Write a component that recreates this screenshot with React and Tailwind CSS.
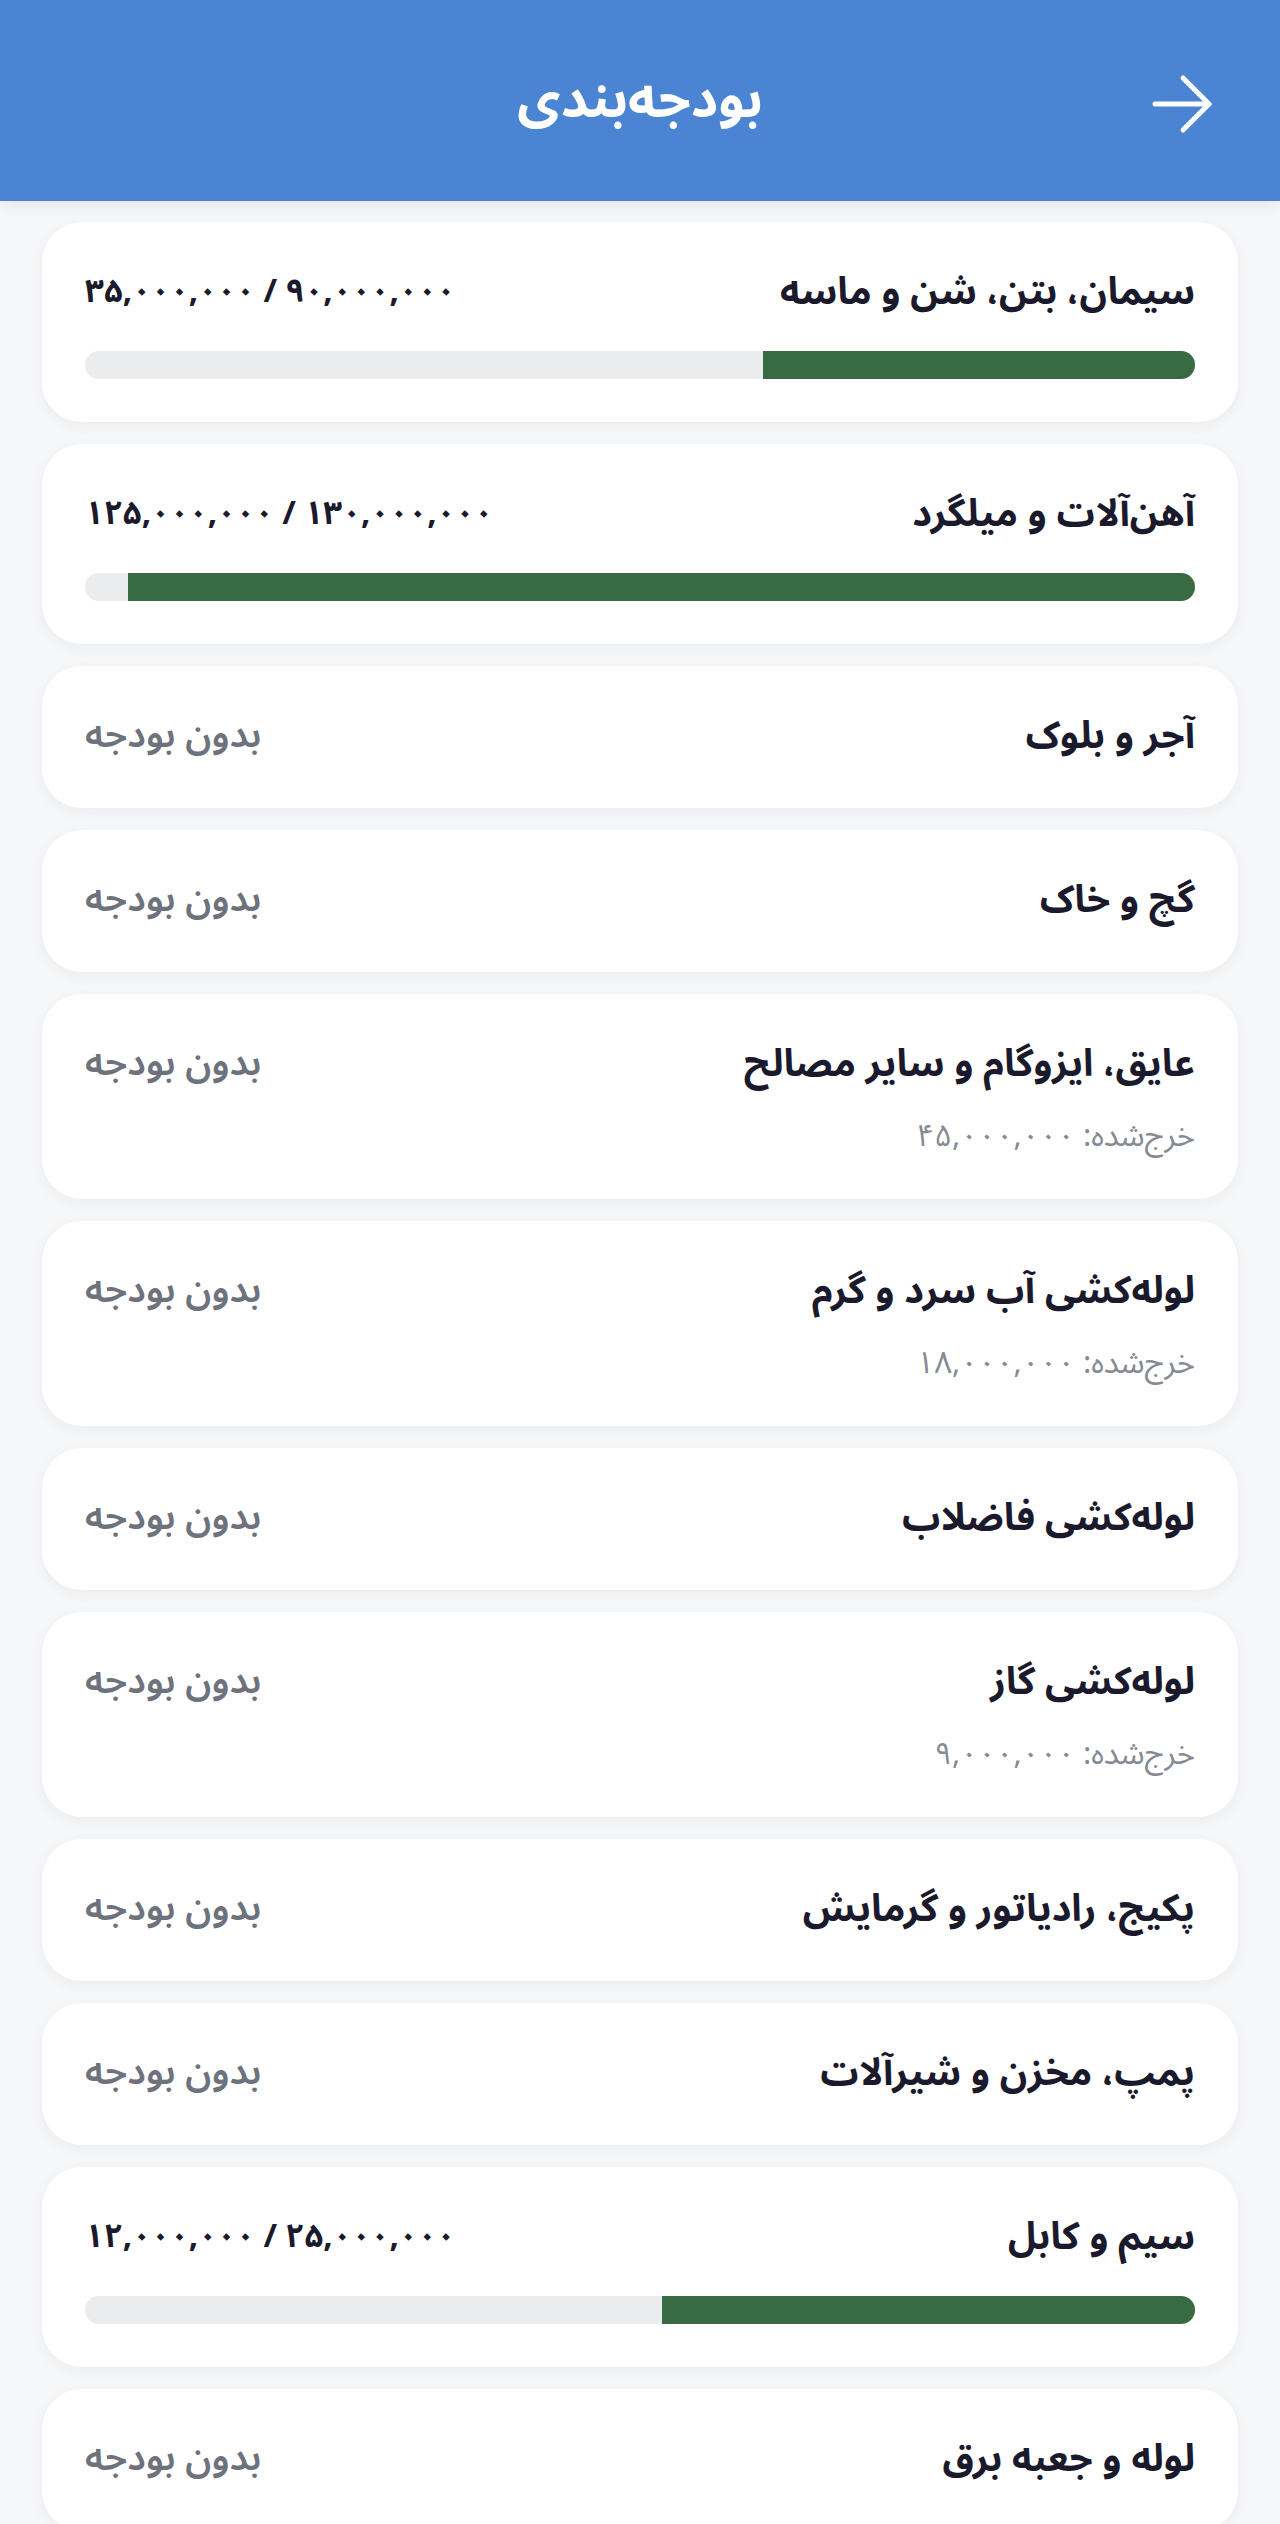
import React from "react";

// Budget list screen (RTL, Persian)
const items = [
  { name: "سیمان، بتن، شن و ماسه", spent: 35, budget: 90, label: "۳۵,۰۰۰,۰۰۰ / ۹۰,۰۰۰,۰۰۰" },
  { name: "آهن‌آلات و میلگرد", spent: 125, budget: 130, label: "۱۲۵,۰۰۰,۰۰۰ / ۱۳۰,۰۰۰,۰۰۰" },
  { name: "آجر و بلوک" },
  { name: "گچ و خاک" },
  { name: "عایق، ایزوگام و سایر مصالح", spentText: "۴۵,۰۰۰,۰۰۰" },
  { name: "لوله‌کشی آب سرد و گرم", spentText: "۱۸,۰۰۰,۰۰۰" },
  { name: "لوله‌کشی فاضلاب" },
  { name: "لوله‌کشی گاز", spentText: "۹,۰۰۰,۰۰۰" },
  { name: "پکیج، رادیاتور و گرمایش" },
  { name: "پمپ، مخزن و شیرآلات" },
  { name: "سیم و کابل", spent: 12, budget: 25, label: "۱۲,۰۰۰,۰۰۰ / ۲۵,۰۰۰,۰۰۰" },
  { name: "لوله و جعبه برق" },
];

function BudgetCard({ item }) {
  const hasBudget = item.budget != null;
  const pct = hasBudget ? Math.min(100, (item.spent / item.budget) * 100) : 0;

  return (
    <div
      className={`bg-white rounded-[40px] shadow-[0_4px_14px_rgba(20,30,50,0.05)] px-[43px] pt-[45px] ${
        hasBudget || item.spentText ? "pb-[43px]" : "pb-[47px]"
      }`}
    >
      <div className="flex items-center justify-between h-[50px]">
        <span className="text-[38px] font-bold text-[#1b1a2c]">{item.name}</span>
        {hasBudget ? (
          <span dir="ltr" className="text-[33px] font-bold text-[#1b1a2c]">
            {item.label}
          </span>
        ) : (
          <span className="text-[37px] font-semibold text-[#6e727d]">بدون بودجه</span>
        )}
      </div>

      {item.spentText && (
        <div className="mt-[27px] h-[40px] flex items-center text-[31px] text-[#868a94]">
          خرج‌شده: {item.spentText}
        </div>
      )}

      {hasBudget && (
        <div className="mt-[34px] h-[28px] rounded-full bg-[#ebecee] overflow-hidden flex">
          <div className="h-full bg-[#386b42]" style={{ width: `${pct}%` }} />
        </div>
      )}
    </div>
  );
}

export default function App() {
  return (
    <div
      dir="rtl"
      className="min-h-screen bg-[#f6f7f9]"
      style={{ fontFamily: "'Noto Sans Arabic', 'DejaVu Sans', 'Noto Sans', sans-serif" }}
    >
      <header className="h-[201px] bg-[#4a84d2] flex items-center justify-center relative shadow-[0_4px_14px_rgba(20,30,50,0.08)]">
        <button className="absolute right-[66px] top-[72px] text-white">
          <svg width="64" height="64" viewBox="0 0 64 64" fill="none" stroke="currentColor" strokeWidth="5" strokeLinecap="round" strokeLinejoin="round">
            <path d="M5 32h54" />
            <path d="M33 6l26 26-26 26" />
          </svg>
        </button>
        <h1 className="text-[53px] font-bold text-white">بودجه‌بندی</h1>
      </header>

      <main className="px-[42px] pt-[21px] pb-[40px] flex flex-col gap-[22px]">
        {items.map((it) => (
          <BudgetCard key={it.name} item={it} />
        ))}
      </main>
    </div>
  );
}
